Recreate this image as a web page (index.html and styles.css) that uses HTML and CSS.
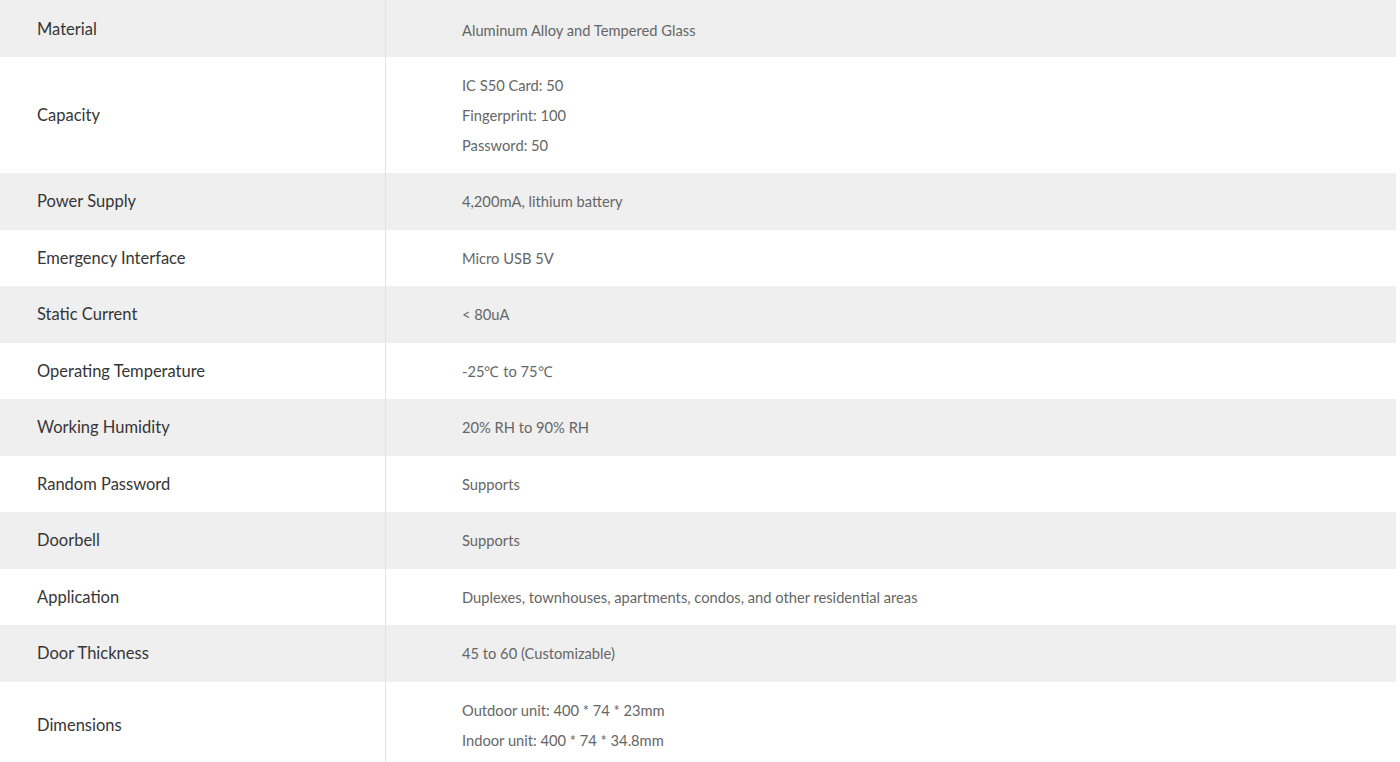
FILE: index.html
```html
<!DOCTYPE html>
<html lang="en">
<head>
<meta charset="utf-8">
<title>Specifications</title>
<link rel="stylesheet" href="styles.css">
</head>
<body>
<div class="specs">
  <div class="row alt first"><div class="label">Material</div><div class="value"><p>Aluminum Alloy and Tempered Glass</p></div></div>
  <div class="row"><div class="label">Capacity</div><div class="value"><p>IC S50 Card: 50</p><p>Fingerprint: 100</p><p>Password: 50</p></div></div>
  <div class="row alt"><div class="label">Power Supply</div><div class="value"><p>4,200mA, lithium battery</p></div></div>
  <div class="row"><div class="label">Emergency Interface</div><div class="value"><p>Micro USB 5V</p></div></div>
  <div class="row alt"><div class="label">Static Current</div><div class="value"><p>&lt; 80uA</p></div></div>
  <div class="row"><div class="label">Operating Temperature</div><div class="value"><p>-25℃ to 75℃</p></div></div>
  <div class="row alt"><div class="label">Working Humidity</div><div class="value"><p>20% RH to 90% RH</p></div></div>
  <div class="row"><div class="label">Random Password</div><div class="value"><p>Supports</p></div></div>
  <div class="row alt"><div class="label">Doorbell</div><div class="value"><p>Supports</p></div></div>
  <div class="row"><div class="label">Application</div><div class="value"><p>Duplexes, townhouses, apartments, condos, and other residential areas</p></div></div>
  <div class="row alt"><div class="label">Door Thickness</div><div class="value"><p>45 to 60 (Customizable)</p></div></div>
  <div class="row"><div class="label">Dimensions</div><div class="value"><p>Outdoor unit: 400 * 74 * 23mm</p><p>Indoor unit: 400 * 74 * 34.8mm</p></div></div>
</div>
</body>
</html>
```

FILE: styles.css
```css
html, body {
  margin: 0;
  padding: 0;
  background: #fff;
}
body {
  font-family: Lato, "Open Sans", "Liberation Sans", sans-serif;
}
.specs {
  width: 1396px;
}
.row {
  display: flex;
  align-items: stretch;
}
.row.alt {
  background: #efefef;
}
.label {
  width: 348px;
  flex: none;
  padding-left: 37px;
  border-right: 1px solid #e2e2e2;
  display: flex;
  align-items: center;
  font-size: 16.5px;
  color: #363636;
}
.value {
  flex: 1;
  padding: 13.25px 0 13.25px 76px;
  font-size: 14.7px;
  color: #666;
}
.row.first .value {
  padding: 15.25px 0 11.25px 76px;
}
.row.first .label {
  padding-top: 2px;
}
.value p {
  margin: 0;
  line-height: 30px;
}
```
